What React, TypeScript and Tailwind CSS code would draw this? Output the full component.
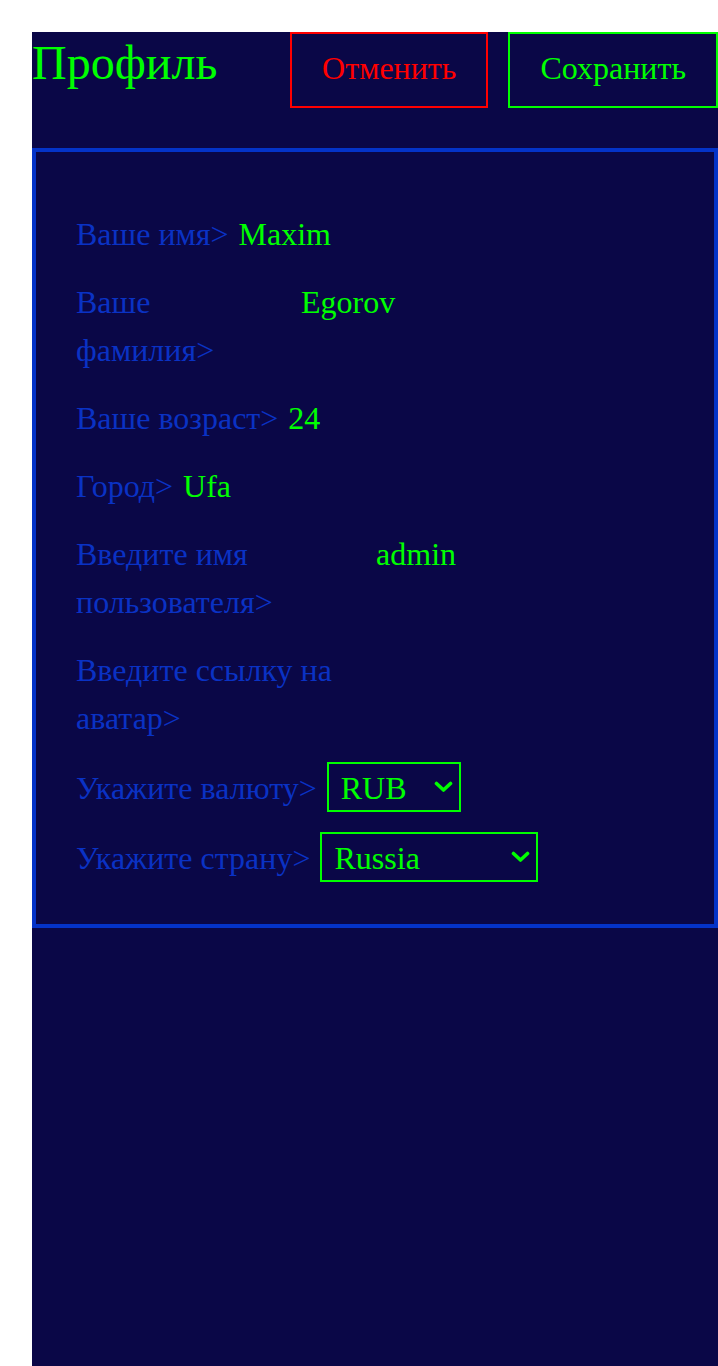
import React from 'react';

const serif = "font-['Liberation_Serif',serif]";

type Field = { label: string; value: string; labelWidth?: string };

const fields: Field[] = [
  { label: 'Ваше имя>', value: 'Maxim' },
  { label: 'Ваше фамилия>', value: 'Egorov', labelWidth: 'w-[215px]' },
  { label: 'Ваше возраст>', value: '24' },
  { label: 'Город>', value: 'Ufa' },
  { label: 'Введите имя пользователя>', value: 'admin', labelWidth: 'w-[292px]' },
  { label: 'Введите ссылку на аватар>', value: '', labelWidth: 'w-[292px]' },
];

function Chevron() {
  return (
    <svg
      width="19"
      height="12"
      viewBox="0 0 19 12"
      className="pointer-events-none absolute right-[8px] top-1/2 -translate-y-1/2"
    >
      <polyline
        points="2.5,2.5 9.5,9 16.5,2.5"
        fill="none"
        stroke="#00ff00"
        strokeWidth="3.6"
        strokeLinecap="round"
        strokeLinejoin="round"
      />
    </svg>
  );
}

function Select({
  options,
  width,
}: {
  options: string[];
  width: string;
}) {
  return (
    <div className={`relative ${width}`}>
      <select
        defaultValue={options[0]}
        className={`${serif} h-[50px] w-full appearance-none border-2 border-[#00ff00] bg-transparent pb-[4px] pl-[12px] text-[32px] text-[#00ff00] outline-none`}
      >
        {options.map((o) => (
          <option key={o} value={o} className="bg-[#0a0747]">
            {o}
          </option>
        ))}
      </select>
      <Chevron />
    </div>
  );
}

function Row({ label, labelWidth, children }: { label: string; labelWidth?: string; children: React.ReactNode }) {
  return (
    <div className="flex items-baseline gap-[10px]">
      <label className={`${labelWidth ?? 'shrink-0'} text-[32px] leading-[48px] text-[#0a32c4]`}>
        {label}
      </label>
      {children}
    </div>
  );
}

export default function App() {
  return (
    <div className={`${serif} bg-white pl-8 pt-8`}>
      <div className="min-h-[1334px] bg-[#0a0747]">
        <header className="mb-10 flex items-baseline justify-between">
          <h1 className="text-[48px] leading-[55px] text-[#00ff00]">Профиль</h1>
          <div className="flex gap-5">
            <button className="border-2 border-[#ff0000] px-[30px] pt-[10px] pb-[14px] text-[32px] leading-[48px] text-[#ff0000]">
              Отменить
            </button>
            <button className="border-2 border-[#00ff00] px-[30px] pt-[10px] pb-[14px] text-[32px] leading-[48px] text-[#00ff00]">
              Сохранить
            </button>
          </div>
        </header>

        <form className="flex flex-col gap-5 border-4 border-[#0433c8] pt-[58px] pb-[42px] pl-10 pr-10">
          {fields.map((f) => (
            <Row key={f.label} label={f.label} labelWidth={f.labelWidth}>
              <input
                readOnly
                defaultValue={f.value}
                className="w-[300px] min-w-0 bg-transparent text-[32px] text-[#00ff00] outline-none"
              />
            </Row>
          ))}
          <Row label="Укажите валюту>">
            <Select options={['RUB', 'USD', 'EUR']} width="w-[134px]" />
          </Row>
          <Row label="Укажите страну>">
            <Select options={['Russia', 'Kazakhstan', 'Belarus']} width="w-[218px]" />
          </Row>
        </form>
      </div>
    </div>
  );
}
